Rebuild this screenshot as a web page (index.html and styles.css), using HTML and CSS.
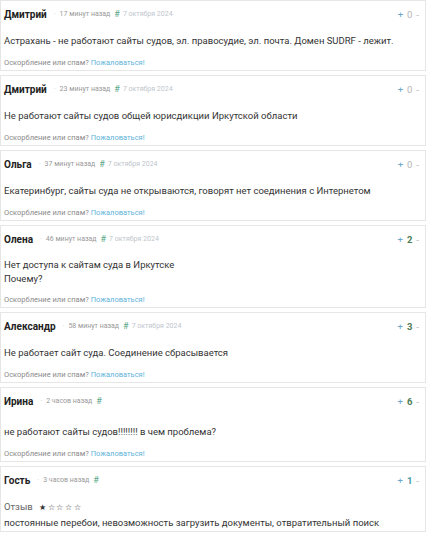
FILE: index.html
```html
<!DOCTYPE html>
<html lang="ru">
<head>
<meta charset="utf-8">
<link rel="stylesheet" href="styles.css">
</head>
<body>
<div class="list">
  <div class="card">
    <div class="head">
      <span class="name">Дмитрий</span><span class="dot">·</span><span class="time">17 минут назад</span><span class="hash">#</span><span class="date">7 октября 2024</span>
      <span class="vote"><span class="plus">+</span><span class="num">0</span><span class="minus">-</span></span>
    </div>
    <div class="body">Астрахань - не работают сайты судов, эл. правосудие, эл. почта. Домен SUDRF - лежит.</div>
    <div class="foot">Оскорбление или спам? <span class="report">Пожаловаться!</span></div>
  </div>
  <div class="card">
    <div class="head">
      <span class="name">Дмитрий</span><span class="dot">·</span><span class="time">23 минут назад</span><span class="hash">#</span><span class="date">7 октября 2024</span>
      <span class="vote"><span class="plus">+</span><span class="num">0</span><span class="minus">-</span></span>
    </div>
    <div class="body">Не работают сайты судов общей юрисдикции Иркутской области</div>
    <div class="foot">Оскорбление или спам? <span class="report">Пожаловаться!</span></div>
  </div>
  <div class="card">
    <div class="head">
      <span class="name">Ольга</span><span class="dot">·</span><span class="time">37 минут назад</span><span class="hash">#</span><span class="date">7 октября 2024</span>
      <span class="vote"><span class="plus">+</span><span class="num">0</span><span class="minus">-</span></span>
    </div>
    <div class="body">Екатеринбург, сайты суда не открываются, говорят нет соединения с Интернетом</div>
    <div class="foot">Оскорбление или спам? <span class="report">Пожаловаться!</span></div>
  </div>
  <div class="card">
    <div class="head">
      <span class="name">Олена</span><span class="dot">·</span><span class="time">46 минут назад</span><span class="hash">#</span><span class="date">7 октября 2024</span>
      <span class="vote"><span class="plus">+</span><span class="num pos">2</span><span class="minus">-</span></span>
    </div>
    <div class="body body-tight">Нет доступа к сайтам суда в Иркутске<br>Почему?</div>
    <div class="foot">Оскорбление или спам? <span class="report">Пожаловаться!</span></div>
  </div>
  <div class="card">
    <div class="head">
      <span class="name">Александр</span><span class="dot">·</span><span class="time">58 минут назад</span><span class="hash">#</span><span class="date">7 октября 2024</span>
      <span class="vote"><span class="plus">+</span><span class="num pos">3</span><span class="minus">-</span></span>
    </div>
    <div class="body">Не работает сайт суда. Соединение сбрасывается</div>
    <div class="foot">Оскорбление или спам? <span class="report">Пожаловаться!</span></div>
  </div>
  <div class="card">
    <div class="head">
      <span class="name">Ирина</span><span class="dot">·</span><span class="time">2 часов назад</span><span class="hash">#</span>
      <span class="vote"><span class="plus">+</span><span class="num pos">6</span><span class="minus">-</span></span>
    </div>
    <div class="body body-spaced">не работают сайты судов!!!!!!!! в чем проблема?</div>
    <div class="foot">Оскорбление или спам? <span class="report">Пожаловаться!</span></div>
  </div>
  <div class="card">
    <div class="head">
      <span class="name">Гость</span><span class="dot">·</span><span class="time">3 часов назад</span><span class="hash">#</span>
      <span class="vote"><span class="plus">+</span><span class="num pos1">1</span><span class="minus">-</span></span>
    </div>
    <div class="body body-review"><span class="review">Отзыв</span><span class="stars">★ ☆ ☆ ☆ ☆</span><br>постоянные перебои, невозможность загрузить документы, отвратительный поиск</div>
  </div>
</div>
</body>
</html>
```
FILE: styles.css
```css
html, body {
  margin: 0;
  padding: 0;
  background: #fff;
}
body {
  font-family: Roboto, "Liberation Sans", sans-serif;
  color: #333;
  overflow: hidden;
  height: 534px;
}
.list {
  display: flex;
  flex-direction: column;
  gap: 4px;
  padding-right: 4px;
}
.card {
  border: 1px solid #e6e6e6;
  padding: 5px 6px 1px 3px;
}
.head {
  display: flex;
  align-items: center;
  height: 16px;
  font-size: 7px;
}
.name {
  font-size: 10px;
  font-weight: 700;
  color: #222;
}
.dot {
  color: #ccc;
  margin: 0 4px 0 7px;
}
.time {
  color: #999;
}
.hash {
  color: #5aa88a;
  font-size: 9px;
  margin: 0 3px 0 4px;
}
.date {
  color: #c0c6cc;
}
.vote {
  margin-left: auto;
  font-size: 9.5px;
  display: flex;
  gap: 4px;
}
.plus {
  color: #6aa7c8;
}
.num {
  color: #b5b5b5;
}
.num.pos {
  color: #4d7d55;
  font-weight: 700;
}
.num.pos1 {
  color: #4a9aa8;
  font-weight: 700;
}
.minus {
  color: #b5b5b5;
}
.body {
  margin-top: 11px;
  font-size: 9.5px;
  line-height: 16px;
  color: #333;
}
.body-tight {
  line-height: 14px;
}
.body-spaced {
  margin-top: 15px;
}
.body-review {
  line-height: 15px;
}
.foot {
  margin-top: 8px;
  line-height: 12px;
  font-size: 7.5px;
  color: #8a8a8a;
}
.report {
  color: #5fb3d9;
}
.review {
  color: #666;
}
.stars {
  margin-left: 6px;
  font-size: 7.5px;
  color: #333;
}
```
